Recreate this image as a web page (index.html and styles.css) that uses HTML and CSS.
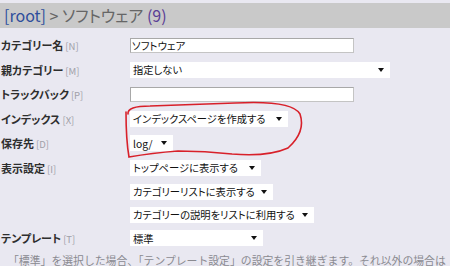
FILE: index.html
```html
<!DOCTYPE html>
<html lang="ja">
<head>
<meta charset="utf-8">
<link rel="stylesheet" href="styles.css">
</head>
<body>
<div class="page">
  <div class="header"><span class="root">[root]</span><span class="sep"> &gt; ソフトウェア </span><span class="count">(9)</span></div>
  <div class="form">
    <div class="row r1"><div class="label">カテゴリー名<span class="key">[N]</span></div><div class="field"><div class="input w-in">ソフトウェア</div></div></div>
    <div class="row"><div class="label">親カテゴリー<span class="key">[M]</span></div><div class="field"><div class="select w-parent"><span>指定しない</span><i class="arrow"></i></div></div></div>
    <div class="row"><div class="label">トラックバック<span class="key">[P]</span></div><div class="field"><div class="input w-in"></div></div></div>
    <div class="row"><div class="label">インデックス<span class="key">[X]</span></div><div class="field"><div class="select w-index"><span>インデックスページを作成する</span><i class="arrow"></i></div></div></div>
    <div class="row"><div class="label">保存先<span class="key">[D]</span></div><div class="field"><div class="select w-dir"><span>log/</span><i class="arrow"></i></div></div></div>
    <div class="row"><div class="label">表示設定<span class="key">[I]</span></div><div class="field"><div class="select w-top"><span>トップページに表示する</span><i class="arrow"></i></div></div></div>
    <div class="row sub"><div class="label"></div><div class="field"><div class="select w-list"><span>カテゴリーリストに表示する</span><i class="arrow"></i></div></div></div>
    <div class="row sub"><div class="label"></div><div class="field"><div class="select w-desc"><span>カテゴリーの説明をリストに利用する</span><i class="arrow"></i></div></div></div>
    <div class="row"><div class="label">テンプレート<span class="key">[T]</span></div><div class="field"><div class="select w-tpl"><span>標準</span><i class="arrow"></i></div></div></div>
    <p class="note">「標準」を選択した場合、「テンプレート設定」の設定を引き継ぎます。それ以外の場合は</p>
  </div>
  <svg class="circle" width="450" height="266" viewBox="0 0 450 266">
    <path d="M128 114 Q127 106 150 106 L235 103 Q292 100 300 114 Q306 132 288 148 Q268 157 232 154 Q205 151 178 151 Q152 153 129 157 Q126 140 126 112" fill="none" stroke="#d8202a" stroke-width="1.6" stroke-linecap="round"/>
  </svg>
</div>
</body>
</html>
```
FILE: styles.css
```css
html, body {
  margin: 0;
  padding: 0;
}
body {
  background: #e9e8f1;
  font-family: "Noto Sans CJK JP", "DejaVu Sans", sans-serif;
  font-feature-settings: "palt";
  color: #222;
  width: 450px;
  height: 266px;
  overflow: hidden;
}
.page {
  position: relative;
  width: 450px;
  height: 266px;
  padding-top: 3px;
  box-sizing: border-box;
}
.header {
  height: 25px;
  background: #c9c9c9;
  padding-left: 4px;
  font-size: 16px;
  line-height: 25px;
  white-space: nowrap;
}
.root {
  color: #2f4e9c;
}
.sep {
  color: #666;
}
.count {
  color: #5a3d96;
}
.form {
  padding-top: 5px;
}
.row {
  display: flex;
  align-items: center;
  height: 24.5px;
}
.row.sub {
  height: 23px;
}
.label {
  width: 130px;
  flex: none;
  padding-left: 1px;
  box-sizing: border-box;
  font-size: 11px;
  font-weight: bold;
  color: #2e2e2e;
  white-space: nowrap;
}
.key {
  font-weight: normal;
  color: #a0a0a8;
  font-size: 9.5px;
  margin-left: 2px;
}
.field {
  display: flex;
}
.input {
  height: 15px;
  box-sizing: border-box;
  background: #fff;
  border: 1px solid #a8a8a8;
  border-right-color: #c4c4c4;
  border-bottom-color: #c4c4c4;
  font-size: 10.5px;
  line-height: 13px;
  padding-left: 1px;
  color: #111;
  white-space: nowrap;
}
.w-in { width: 224px; }
.select {
  height: 16px;
  box-sizing: border-box;
  background: #fff;
  display: flex;
  align-items: center;
  justify-content: space-between;
  padding: 0 4px 0 3px;
  font-size: 10.3px;
  color: #111;
  white-space: nowrap;
}
.arrow {
  display: block;
  flex: none;
  width: 0;
  height: 0;
  border-left: 3.5px solid transparent;
  border-right: 3.5px solid transparent;
  border-top: 4px solid #111;
  margin-left: 6px;
  margin-right: 2px;
}
.w-parent { width: 260px; }
.w-index { width: 158px; }
.w-dir { width: 43px; }
.w-top { width: 131px; }
.w-list { width: 143px; }
.w-desc { width: 184px; }
.w-tpl { width: 133px; }
.note {
  margin: 1px 0 0 8px;
  font-size: 10.85px;
  font-feature-settings: normal;
  line-height: 16px;
  color: #8a8a90;
  white-space: nowrap;
}
.circle {
  position: absolute;
  left: 0;
  top: 0;
  pointer-events: none;
}
```
